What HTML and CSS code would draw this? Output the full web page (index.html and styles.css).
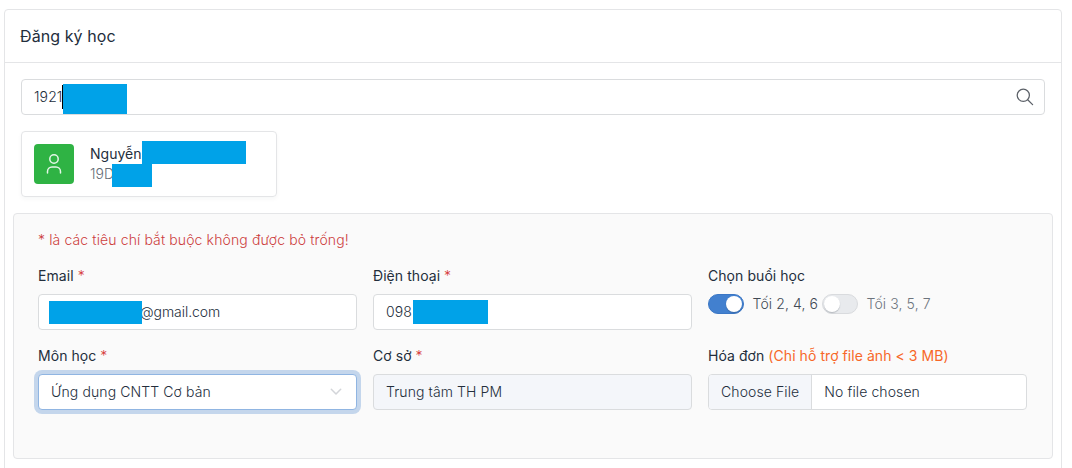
FILE: index.html
```html
<!DOCTYPE html>
<html lang="vi">
<head>
<meta charset="utf-8">
<title>Đăng ký học</title>
<link rel="stylesheet" href="styles.css">
</head>
<body>
<main class="card">
  <header class="card-header"><h1 class="card-title">Đăng ký học</h1></header>
  <div class="card-body">
    <div class="control search">
      <span class="search-value">1921</span><span class="mask mask-code"></span>
      <svg class="search-icon" width="18" height="18" viewBox="0 0 18 18" fill="none" stroke="#5c6168" stroke-width="1.25" stroke-linecap="round"><circle cx="7.3" cy="7.3" r="6.1"/><path d="M11.7 11.7L16.6 16.6"/></svg>
    </div>
    <div class="student">
      <span class="avatar">
        <svg width="24" height="24" viewBox="0 0 24 24" fill="none" stroke="#e4f6e7" stroke-width="1.5" stroke-linecap="round"><circle cx="12" cy="7" r="4.2"/><path d="M5.5 21v-1.5a4.5 4.5 0 0 1 4.5-4.5h4a4.5 4.5 0 0 1 4.5 4.5V21"/></svg>
      </span>
      <div class="student-info">
        <div class="student-name">Nguyễn</div>
        <div class="student-id">19D</div>
      </div>
      <span class="mask mask-name"></span><span class="mask mask-id"></span>
    </div>
    <section class="panel">
      <p class="notice">* là các tiêu chí bắt buộc không được bỏ trống!</p>
      <div class="fields">
        <div class="field">
          <div class="label">Email <span class="required">*</span></div>
          <div class="control email"><span class="email-value">@gmail.com</span><span class="mask mask-email"></span></div>
        </div>
        <div class="field">
          <div class="label">Điện thoại <span class="required">*</span></div>
          <div class="control"><span>098</span><span class="mask mask-phone"></span></div>
        </div>
        <div class="field">
          <div class="label">Chọn buổi học</div>
          <div class="switches">
            <span class="switch on"></span><span class="switch-text">Tối 2, 4, 6</span>
            <span class="switch"></span><span class="switch-text muted">Tối 3, 5, 7</span>
          </div>
        </div>
        <div class="field">
          <div class="label">Môn học <span class="required">*</span></div>
          <div class="control select"><span>Ứng dụng CNTT Cơ bản</span>
            <svg width="12" height="8" viewBox="0 0 12 8" fill="none" stroke="#d3d5d9" stroke-width="1.5" stroke-linecap="round" stroke-linejoin="round"><path d="M1.3 1.3L6 6L10.7 1.3"/></svg>
          </div>
        </div>
        <div class="field">
          <div class="label">Cơ sở <span class="required">*</span></div>
          <div class="control disabled">Trung tâm TH PM</div>
        </div>
        <div class="field">
          <div class="label">Hóa đơn <span class="hint">(Chỉ hỗ trợ file ảnh &lt; 3 MB)</span></div>
          <div class="control file"><span class="file-button">Choose File</span><span class="file-name">No file chosen</span></div>
        </div>
      </div>
    </section>
  </div>
</main>
</body>
</html>
```
FILE: styles.css
```css
* { box-sizing: border-box; }
body {
  margin: 0;
  padding: 9px 10px 0 4px;
  height: 468px;
  overflow: hidden;
  background: #fff;
  color: #232e3c;
  font: 400 14px/20px Inter, "Noto Sans", sans-serif;
}
.card {
  height: 480px;
  border: 1px solid #e4e5e7;
  border-radius: 4px;
}
.card-header {
  height: 53px;
  padding: 0 15px;
  display: flex;
  align-items: center;
  border-bottom: 1px solid #e4e5e7;
}
.card-title { margin: 0; font-size: 16px; font-weight: 400; line-height: 24px; letter-spacing: .08px; }
.card-body { padding: 16px 8px; }
.control {
  position: relative;
  display: flex;
  align-items: center;
  height: 36px;
  padding: 0 12px;
  border: 1px solid #dadcde;
  border-radius: 4px;
  background: #fff;
  font-weight: 300;
  letter-spacing: .1px;
}
.search { margin: 0 8px; justify-content: space-between; padding-right: 10px; }
.search-value { height: 24px; line-height: 24px; width: 29px; border-right: 1px solid #000; }
.mask { position: absolute; background: #00a2e8; }
.mask-code { left: 41px; top: 4px; width: 64px; height: 30px; }
.student {
  position: relative;
  display: flex;
  align-items: center;
  gap: 16px;
  width: 256px;
  height: 66px;
  margin: 16px 8px;
  padding: 0 12px;
  border: 1px solid #e4e5e7;
  border-radius: 4px;
  box-shadow: 0 2px 4px rgba(35, 46, 60, .04);
}
.avatar {
  display: flex;
  align-items: center;
  justify-content: center;
  width: 40px;
  height: 40px;
  border-radius: 4px;
  background: #2fb344;
}
.student-id { color: #656d77; font-weight: 300; }
.mask-name { left: 120px; top: 9px; width: 104px; height: 23px; }
.mask-id { left: 90px; top: 32px; width: 40px; height: 23px; }
.panel {
  height: 246px;
  padding: 16px 25px 0 24px;
  border: 1px solid #e4e5e7;
  border-radius: 4px;
  background: #fafafa;
}
.notice { margin: 0 0 16px; color: #cd3e3e; font-weight: 300; letter-spacing: .12px; }
.fields { display: grid; grid-template-columns: repeat(3, 1fr); gap: 16px; }
.field { height: 64px; }
.label { margin-bottom: 8px; letter-spacing: .06px; }
.required { color: #d63939; font-weight: 300; }
.hint { color: #f76728; }
.mask-email { left: 10px; top: 6px; width: 93px; height: 23px; }
.email-value { padding-left: 89px; letter-spacing: -.05px; }
.mask-phone { left: 39px; top: 5px; width: 75px; height: 24px; }
.select {
  justify-content: space-between;
  padding-right: 14px;
  border-color: #90b5e2;
  box-shadow: 0 0 0 4px #c4d6ec;
}
.disabled { background: #f4f6fa; }
.file { padding: 0; }
.file-button {
  height: 34px;
  padding: 7px 12px;
  border-right: 1px solid #dadcde;
  border-radius: 3px 0 0 3px;
  background: #f4f6fa;
}
.file-name { padding-left: 12px; }
.switches { display: flex; align-items: center; height: 20px; font-weight: 300; letter-spacing: .1px; }
.switch {
  display: flex;
  align-items: center;
  width: 36px;
  height: 20px;
  border: 1px solid #d9dbde;
  border-radius: 10px;
  background: #e8eaed;
}
.switch::before {
  content: "";
  width: 16px;
  height: 16px;
  margin-left: 1px;
  border-radius: 50%;
  background: #fff;
  box-shadow: 0 1px 1px rgba(35, 46, 60, .25);
}
.switch.on { background: #4280cf; border-color: #3b77c5; }
.switch.on::before { margin-left: 17px; }
.switch-text { margin: 0 4px 0 8.5px; color: #414953; }
.muted { color: #6d747d; }
```
